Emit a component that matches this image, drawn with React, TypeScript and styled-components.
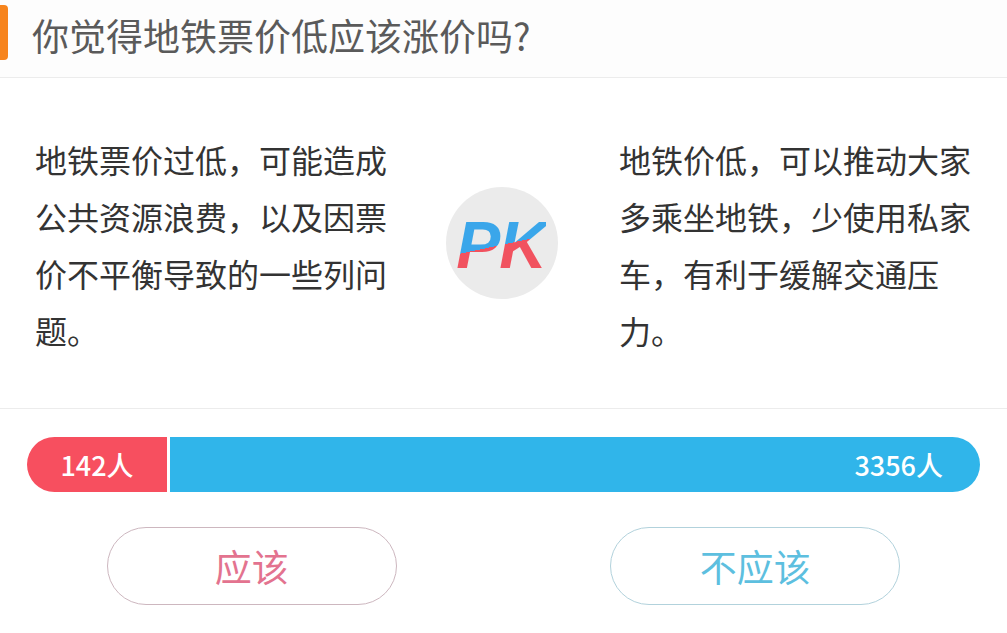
import React from 'react';
import styled, { createGlobalStyle } from 'styled-components';

interface Side {
  text: string;
  votes: number;
  label: string;
  color: string;
  border: string;
}

const question = '你觉得地铁票价低应该涨价吗?';

const pro: Side = {
  text: '地铁票价过低，可能造成公共资源浪费，以及因票价不平衡导致的一些列问题。',
  votes: 142,
  label: '应该',
  color: '#e3738f',
  border: '#cdb7bf',
};

const con: Side = {
  text: '地铁价低，可以推动大家多乘坐地铁，少使用私家车，有利于缓解交通压力。',
  votes: 3356,
  label: '不应该',
  color: '#5dbfdf',
  border: '#b2d2dc',
};

export default function App() {
  return (
    <>
      <GlobalStyle />
      <Page>
        <Header>
          <Marker />
          <Title>{question}</Title>
        </Header>

        <Debate>
          <Argument>{pro.text}</Argument>
          <PkBadge>
            <PkText>PK</PkText>
          </PkBadge>
          <Argument>{con.text}</Argument>
        </Debate>

        <VoteSection>
          <VoteBar>
            <ProPart>{pro.votes}人</ProPart>
            <ConPart>{con.votes}人</ConPart>
          </VoteBar>

          <Buttons>
            <VoteButton color={pro.color} $border={pro.border}>
              {pro.label}
            </VoteButton>
            <VoteButton color={con.color} $border={con.border}>
              {con.label}
            </VoteButton>
          </Buttons>
        </VoteSection>
      </Page>
    </>
  );
}

const GlobalStyle = createGlobalStyle`
  html, body {
    margin: 0;
    padding: 0;
    background: #ffffff;
  }
  body {
    font-family: 'Noto Sans CJK SC', 'Noto Sans', sans-serif;
  }
`;

const Page = styled.div`
  width: 1007px;
  height: 633px;
  overflow: hidden;
  background: #ffffff;
`;

const Header = styled.div`
  display: flex;
  align-items: center;
  height: 77px;
  background: #fdfdfd;
  border-bottom: 1px solid #ececec;
`;

const Marker = styled.div`
  width: 8px;
  height: 55px;
  margin-top: -12px;
  background: #f7841d;
  border-radius: 0 4px 4px 0;
`;

const Title = styled.h1`
  margin: -8px 0 0 24px;
  font-size: 37px;
  font-weight: 400;
  color: #5a5a5a;
`;

const Debate = styled.div`
  display: grid;
  grid-template-columns: 356px 228px 360px;
  align-items: center;
  height: 331px;
  padding-left: 35px;
  border-bottom: 1px solid #ececec;
  box-sizing: border-box;
`;

const Argument = styled.p`
  margin: 4px 0 0;
  width: 356px;
  font-size: 32px;
  line-height: 57px;
  color: #333333;
  line-break: strict;
`;

const PkBadge = styled.div`
  justify-self: center;
  margin-left: -6px;
  width: 112px;
  height: 112px;
  border-radius: 50%;
  background: #ebebeb;
  display: flex;
  align-items: center;
  justify-content: center;
`;

const PkText = styled.span`
  font-family: 'Liberation Sans', Arial, sans-serif;
  font-size: 66px;
  font-weight: 700;
  font-style: italic;
  letter-spacing: -1px;
  line-height: 1;
  margin: 4px 0 0 -2px;
  background: linear-gradient(168deg, #3aa6ea 50%, #f1525f 50%);
  -webkit-background-clip: text;
  background-clip: text;
  color: transparent;
`;

const VoteSection = styled.div`
  padding-top: 28px;
`;

const VoteBar = styled.div`
  display: flex;
  height: 55px;
  margin: 0 27px;
  border-radius: 28px;
  overflow: hidden;
  gap: 3px;
  font-size: 27px;
  font-weight: 500;
  color: #ffffff;
`;

const ProPart = styled.div`
  flex: 0 0 140px;
  display: flex;
  align-items: center;
  justify-content: center;
  background: #f74f5f;
`;

const ConPart = styled.div`
  flex: 1;
  display: flex;
  align-items: center;
  justify-content: flex-end;
  padding-right: 37px;
  background: #30b5ea;
`;

const Buttons = styled.div`
  display: flex;
  justify-content: space-around;
  margin-top: 35px;
`;

const VoteButton = styled.button<{ $border: string }>`
  width: 290px;
  height: 78px;
  border: 1px solid ${({ $border }) => $border};
  border-radius: 39px;
  background: #ffffff;
  color: ${({ color }) => color};
  font-family: 'Noto Sans CJK SC', 'Noto Sans', sans-serif;
  font-size: 37px;
  padding: 0;
  cursor: pointer;
`;
